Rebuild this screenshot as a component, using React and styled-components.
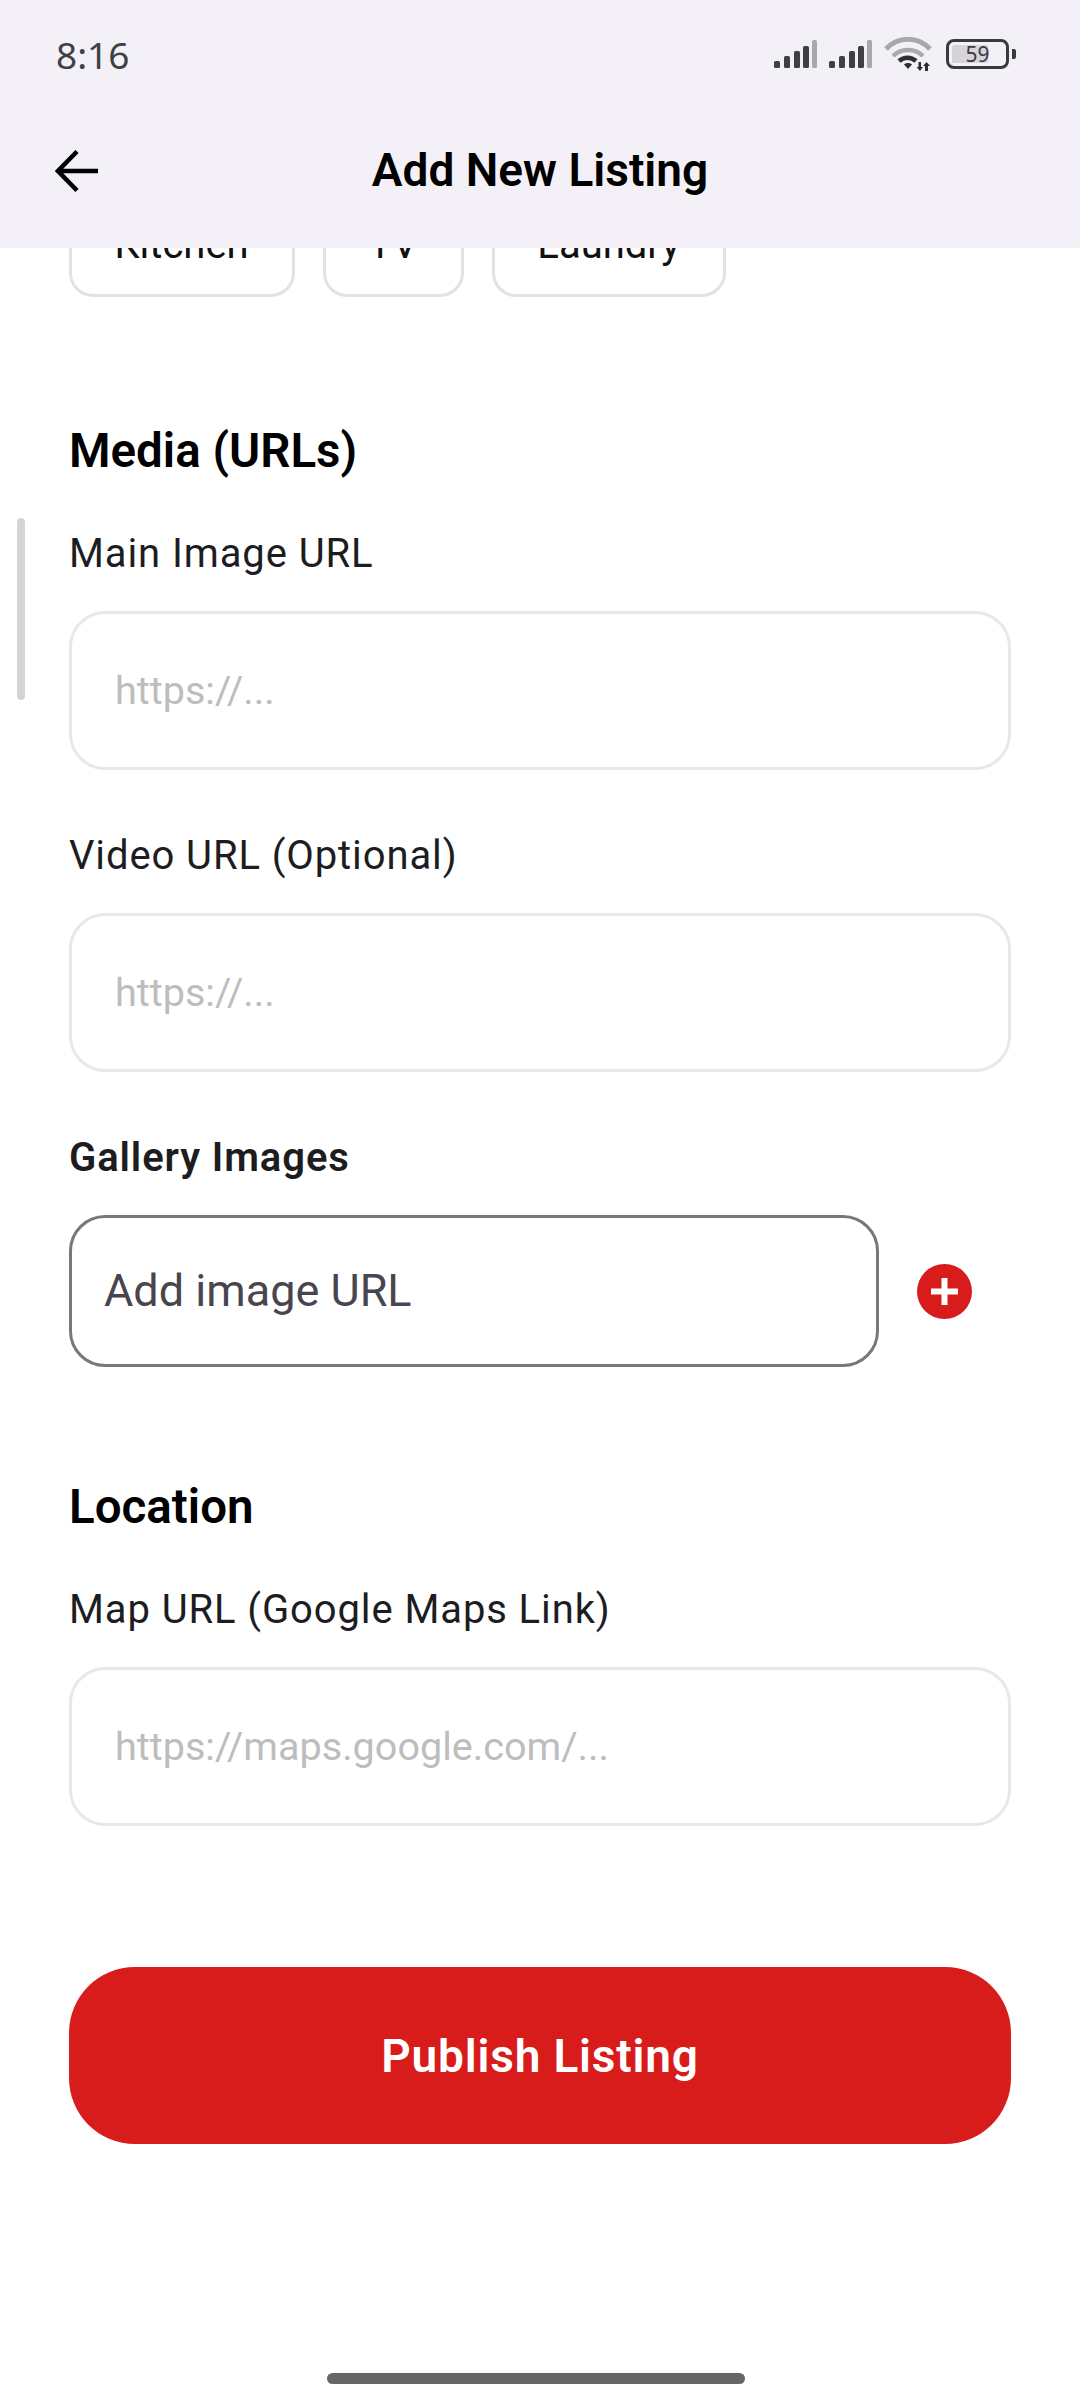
import React from 'react'
import styled, { createGlobalStyle } from 'styled-components'

const GlobalStyle = createGlobalStyle`
html, body {
    margin: 0;
    padding: 0;
    background: #ffffff;
}
* {
    box-sizing: border-box;
}
`

function SignalIcon() {
    const bars = [
        { x: 0, h: 7 },
        { x: 10, h: 12 },
        { x: 20, h: 17 },
        { x: 29, h: 22 },
    ]
    return (
        <svg width="43" height="28" viewBox="0 0 43 28">
            {bars.map(b => (
                <rect key={b.x} x={b.x} y={28 - b.h} width="6" height={b.h} rx="1.5" fill="#3f3f44" />
            ))}
            <rect x="38" y="0" width="5" height="28" rx="1.5" fill="#a9a8ad" />
        </svg>
    )
}

function WifiIcon() {
    return (
        <svg width="48" height="34" viewBox="0 0 48 34" fill="none">
            <path d="M2 12 C14 -1 34 -1 46 12" stroke="#a9a8ad" strokeWidth="5" />
            <path d="M9 19 C17 11 31 11 39 19" stroke="#a9a8ad" strokeWidth="4.5" />
            <path d="M15 24 C20 19.5 27 19.5 32 24" stroke="#2f2f33" strokeWidth="4.5" />
            <path d="M20 27.5 C22 25.5 26 25.5 28 27.5 L24 32 Z" fill="#2f2f33" />
            <path d="M34.5 25 h2.5 v5 h2 L36 34 l-3.5 -4 h2 Z" fill="#2f2f33" />
            <path d="M41 34 v-5 h-2 L42.5 25 l3.5 4 h-2 v5 Z" fill="#2f2f33" />
        </svg>
    )
}

function BackArrow() {
    return (
        <svg width="44" height="44" viewBox="0 0 44 44" fill="none">
            <path d="M43 22 H3 M22 2.5 L3 22 L22 41.5" stroke="#000000" strokeWidth="4.5" />
        </svg>
    )
}

function PlusBadge() {
    return (
        <svg width="55" height="55" viewBox="0 0 55 55">
            <circle cx="27.5" cy="27.5" r="27.5" fill="#d81b1b" />
            <path d="M27.5 14 V41 M14 27.5 H41" stroke="#ffffff" strokeWidth="6" />
        </svg>
    )
}

function Field({ label, placeholder }) {
    return (
        <FieldWrap>
            <FieldLabel>{label}</FieldLabel>
            <InputBox>{placeholder}</InputBox>
        </FieldWrap>
    )
}

export default function App() {
    return (
        <Screen>
            <GlobalStyle />
            <Header>
                <StatusBar>
                    <Clock>8:16</Clock>
                    <StatusIcons>
                        <SignalIcon />
                        <SignalIcon />
                        <WifiIcon />
                        <Battery>
                            <BatteryBody>
                                <BatteryFill />
                                <BatteryText>59</BatteryText>
                            </BatteryBody>
                            <BatteryNub />
                        </Battery>
                    </StatusIcons>
                </StatusBar>
                <TopBar>
                    <BackButton><BackArrow /></BackButton>
                    <Title>Add New Listing</Title>
                </TopBar>
            </Header>

            <Scroller>
                <ScrollThumb />
                <Content>
                    <ChipRow>
                        <Chip>Kitchen</Chip>
                        <Chip>TV</Chip>
                        <Chip>Laundry</Chip>
                    </ChipRow>

                    <SectionTitle>Media (URLs)</SectionTitle>
                    <Field label="Main Image URL" placeholder="https://..." />
                    <Field label="Video URL (Optional)" placeholder="https://..." />

                    <GalleryLabel>Gallery Images</GalleryLabel>
                    <GalleryRow>
                        <GalleryInput>Add image URL</GalleryInput>
                        <PlusBadge />
                    </GalleryRow>

                    <LocationTitle>Location</LocationTitle>
                    <Field label="Map URL (Google Maps Link)" placeholder="https://maps.google.com/..." />

                    <PublishButton>Publish Listing</PublishButton>
                </Content>
                <HomeBar />
            </Scroller>
        </Screen>
    )
}

const Screen = styled.div`
width: 1080px;
height: 2400px;
display: flex;
flex-direction: column;
overflow: hidden;
background: #ffffff;
font-family: Roboto, "Liberation Sans", sans-serif;
`

const Header = styled.header`
height: 248px;
flex-shrink: 0;
background: #f3f0f7;
position: relative;
z-index: 1;
`

const StatusBar = styled.div`
height: 108px;
display: flex;
justify-content: space-between;
align-items: center;
padding: 0 64px 0 56px;
`

const Clock = styled.span`
font-family: "Noto Sans", sans-serif;
font-size: 37px;
color: #3f3f44;
`

const StatusIcons = styled.div`
display: flex;
align-items: center;
gap: 12px;
`

const Battery = styled.div`
display: flex;
align-items: center;
gap: 3px;
margin-left: 2px;
`

const BatteryBody = styled.div`
width: 63px;
height: 30px;
border: 3.5px solid #3a3a3e;
border-radius: 8px;
position: relative;
display: flex;
align-items: center;
justify-content: center;
`

const BatteryFill = styled.div`
position: absolute;
left: 3px;
top: 3px;
bottom: 3px;
width: 36px;
border-radius: 2px;
background: #d6d4da;
`

const BatteryText = styled.span`
position: relative;
font-family: "Noto Sans", sans-serif;
font-size: 21px;
line-height: 1;
color: #3a3a3e;
`

const BatteryNub = styled.div`
width: 4px;
height: 10px;
border-radius: 0 2px 2px 0;
background: #3a3a3e;
`

const TopBar = styled.div`
height: 124px;
position: relative;
display: flex;
align-items: center;
justify-content: center;
`

const BackButton = styled.div`
position: absolute;
left: 55px;
top: 41px;
line-height: 0;
`

const Title = styled.h1`
margin: 0;
font-size: 46px;
font-weight: 600;
color: #000000;
`

const Scroller = styled.main`
flex: 1;
position: relative;
overflow: hidden;
`

const ScrollThumb = styled.div`
position: absolute;
left: 17px;
top: 270px;
width: 8px;
height: 182px;
border-radius: 4px;
background: #d4d4d4;
`

const Content = styled.div`
margin-top: -57px;
padding: 0 69px;
display: flex;
flex-direction: column;
`

const ChipRow = styled.div`
display: flex;
gap: 28px;
`

const Chip = styled.div`
height: 106px;
padding: 0 43px 0 42.5px;
display: flex;
align-items: center;
border: 3px solid #e2e2e2;
border-radius: 24px;
font-size: 40px;
color: #111111;
`

const SectionTitle = styled.h2`
margin: 126px 0 0;
height: 56px;
line-height: 56px;
font-size: 47.5px;
font-weight: 600;
color: #000000;
`

const LocationTitle = styled(SectionTitle)`
margin-top: 112px;
`

const FieldWrap = styled.div`
display: flex;
flex-direction: column;
margin-top: 62px;
h2 + & {
    margin-top: 51px;
}
`

const FieldLabel = styled.label`
height: 48px;
line-height: 48px;
font-size: 40px;
letter-spacing: 0.9px;
color: #1d1d1f;
`

const InputBox = styled.div`
height: 159px;
margin-top: 33px;
padding: 0 43px;
display: flex;
align-items: center;
border: 3px solid #e5e8ef;
border-radius: 36px;
font-size: 39.6px;
color: #bdbdbd;
`

const GalleryLabel = styled.div`
margin-top: 62px;
height: 48px;
line-height: 48px;
font-size: 40px;
font-weight: 600;
letter-spacing: 0.9px;
color: #1d1d1f;
`

const GalleryRow = styled.div`
display: flex;
align-items: center;
gap: 38px;
margin-top: 33px;
`

const GalleryInput = styled.div`
width: 810px;
height: 152px;
padding: 0 32px 2px;
display: flex;
align-items: center;
border: 3px solid #79767c;
border-radius: 36px;
font-size: 45px;
color: #49454f;
`

const PublishButton = styled.button`
margin-top: 141px;
height: 177px;
width: 100%;
border: none;
border-radius: 66px;
background: #d81b1b;
color: #ffffff;
font-family: inherit;
font-size: 46px;
font-weight: 600;
letter-spacing: 0.8px;
`

const HomeBar = styled.div`
position: absolute;
left: 327px;
bottom: 16px;
width: 418px;
height: 11px;
border-radius: 6px;
background: #666666;
`
